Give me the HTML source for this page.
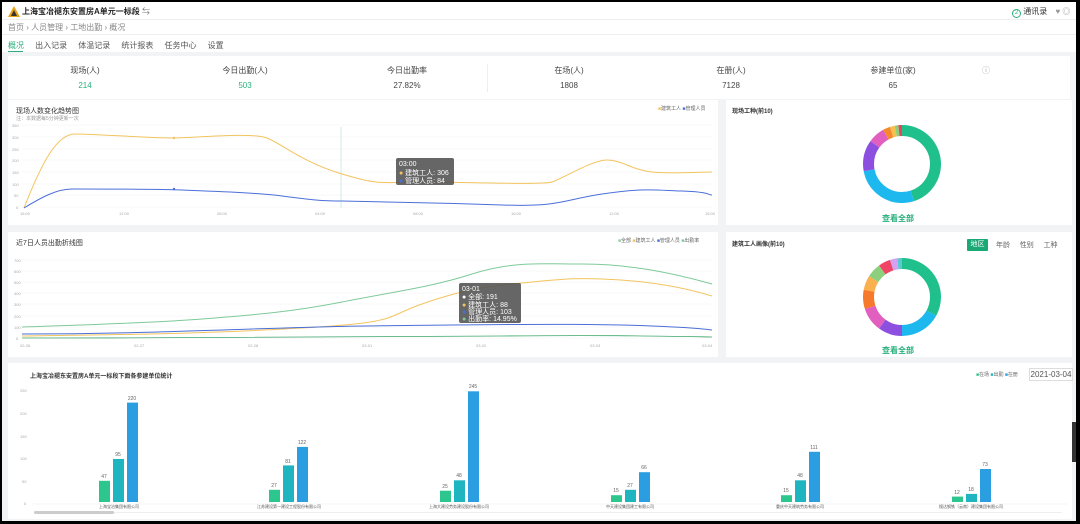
<!DOCTYPE html>
<html><head><meta charset="utf-8"><style>
*{margin:0;padding:0;box-sizing:border-box}
body{width:1080px;height:524px;overflow:hidden;background:#000;font-family:"Liberation Sans","Noto Sans CJK SC",sans-serif;color:#333;position:relative}
.frame{position:absolute;left:2px;top:2px;width:1074px;height:519px;background:#f2f3f5;overflow:hidden}
.abs{position:absolute}
.card{position:absolute;background:#fff}
.t{font-size:7px;color:#333;position:absolute}
</style></head><body>
<div class="frame">
 <div class="abs" style="left:0;top:0;width:1074px;height:50px;background:#fff"></div>
 <svg class="abs" style="left:6px;top:4px" width="12" height="11" viewBox="0 0 12 11"><path d="M6 0L12 11H0Z" fill="#e8a317"/><path d="M6 4L9 10H3Z" fill="#333"/></svg>
 <div class="abs" style="left:20px;top:4px;font-size:8px;font-weight:bold;color:#222">上海宝冶褪东安置房A单元一标段 <span style="font-weight:normal;color:#777">⇆</span></div>
 <div class="abs" style="left:1010px;top:4px;font-size:8px;color:#333"><span style="display:inline-block;width:9px;height:9px;border:1px solid #2ab07c;border-radius:50%;font-size:6px;text-align:center;line-height:7px;color:#2ab07c">2</span> 通讯录 <span style="color:#999;margin-left:6px">♥ ◎</span></div>
 <div class="abs" style="left:0;top:17px;width:1074px;height:1px;background:#eee"></div>
 <div class="abs" style="left:6px;top:20px;font-size:8px;color:#888">首页 › 人员管理 › 工地出勤 › 概况</div>
 <div class="abs" style="left:0;top:32px;width:1074px;height:1px;background:#eee"></div>
 <div class="abs" style="left:6px;top:38px;font-size:8px;color:#555;word-spacing:0"><span style="color:#2ab07c">概况</span>&nbsp;&nbsp;&nbsp;&nbsp;&nbsp;出入记录&nbsp;&nbsp;&nbsp;&nbsp;&nbsp;体温记录&nbsp;&nbsp;&nbsp;&nbsp;&nbsp;统计报表&nbsp;&nbsp;&nbsp;&nbsp;&nbsp;任务中心&nbsp;&nbsp;&nbsp;&nbsp;&nbsp;设置</div>
 <div class="abs" style="left:6px;top:49px;width:15px;height:1px;background:#2ab07c"></div>

 <div class="card" style="left:6px;top:54px;width:1062px;height:43px"></div>
 <div class="abs" style="top:63px;left:0;width:1074px;font-size:8px;color:#444">
  <span class="abs" style="left:48px;width:70px;text-align:center">现场(人)</span>
  <span class="abs" style="left:208px;width:70px;text-align:center">今日出勤(人)</span>
  <span class="abs" style="left:370px;width:70px;text-align:center">今日出勤率</span>
  <span class="abs" style="left:532px;width:70px;text-align:center">在场(人)</span>
  <span class="abs" style="left:694px;width:70px;text-align:center">在册(人)</span>
  <span class="abs" style="left:856px;width:70px;text-align:center">参建单位(家)</span>
  <span class="abs" style="left:980px;color:#aaa">ⓘ</span>
 </div>
 <div class="abs" style="top:79px;left:0;width:1074px;font-size:8px;color:#444">
  <span class="abs" style="left:48px;width:70px;text-align:center;color:#2ab07c">214</span>
  <span class="abs" style="left:208px;width:70px;text-align:center;color:#2ab07c">503</span>
  <span class="abs" style="left:370px;width:70px;text-align:center">27.82%</span>
  <span class="abs" style="left:532px;width:70px;text-align:center">1808</span>
  <span class="abs" style="left:694px;width:70px;text-align:center">7128</span>
  <span class="abs" style="left:856px;width:70px;text-align:center">65</span>
 </div>
 <div class="abs" style="left:485px;top:62px;width:1px;height:28px;background:#eee"></div>

 <!-- chart 1 -->
 <div class="card" style="left:6px;top:98px;width:710px;height:125px"></div>
 <div class="t" style="left:14px;top:104px;font-size:7px">现场人数变化趋势图</div>
 <div class="t" style="left:14px;top:113px;font-size:5px;color:#999">注：本数据每5分钟更新一次</div>
 <div class="t" style="left:656px;top:103px;font-size:5px;color:#666"><span style="color:#f2c45f">■</span>建筑工人 <span style="color:#4a6fd8">■</span>管理人员</div>
 <svg class="abs" style="left:0;top:0" width="720" height="230">
  <g stroke="#f0f0f0" stroke-width="0.5">
   <line x1="20" y1="123" x2="710" y2="123"/><line x1="20" y1="135" x2="710" y2="135"/><line x1="20" y1="147" x2="710" y2="147"/><line x1="20" y1="158" x2="710" y2="158"/><line x1="20" y1="170" x2="710" y2="170"/><line x1="20" y1="182" x2="710" y2="182"/><line x1="20" y1="193" x2="710" y2="193"/><line x1="20" y1="205" x2="710" y2="205"/>
  </g>
  <g font-size="4" fill="#aaa"><text x="10" y="125">350</text><text x="10" y="137">300</text><text x="10" y="149">250</text><text x="10" y="160">200</text><text x="10" y="172">150</text><text x="10" y="184">100</text><text x="12" y="195">50</text><text x="14" y="207">0</text>
  <text x="18" y="213">16:00</text><text x="117" y="213">12:00</text><text x="215" y="213">08:00</text><text x="313" y="213">04:00</text><text x="411" y="213">08:00</text><text x="509" y="213">16:00</text><text x="607" y="213">12:00</text><text x="703" y="213">16:00</text></g>
  <line x1="339" y1="125" x2="339" y2="206" stroke="#bfe3d6" stroke-width="0.7"/>
  <path d="M22 206C40 160 55 132 73 132S150 136 170 136S250 130 265 136S300 160 340 172S380 180 420 180S540 183 550 180S590 158 605 158S630 168 650 170S700 170 710 170" fill="none" stroke="#f2c45f" stroke-width="1"/>
  <path d="M22 206C40 195 55 187 70 187S160 187 180 188S250 190 280 194S320 199 340 199S440 201 500 203S560 198 600 192S650 188 680 189S705 193 710 193" fill="none" stroke="#4a6fd8" stroke-width="1"/>
  <circle cx="172" cy="136" r="1.2" fill="#f2c45f"/><circle cx="172" cy="187" r="1.2" fill="#4a6fd8"/>
  <rect x="394" y="156" width="58" height="27" rx="2" fill="#555" opacity=".9"/>
  <g font-size="7" fill="#fff"><text x="397" y="164">03:00</text><text x="397" y="173"><tspan fill="#f2c45f">●</tspan> 建筑工人: 306</text><text x="397" y="181"><tspan fill="#4a6fd8">●</tspan> 管理人员: 84</text></g>
 </svg>

 <!-- right donut 1 -->
 <div class="card" style="left:724px;top:98px;width:346px;height:125px"></div>
 <div class="t" style="left:730px;top:104px;font-weight:bold;font-size:6px">现场工种(前10)</div>
 <svg class="abs" style="left:858px;top:120px" width="84" height="84" viewBox="0 0 84 84">
  <g fill="none" stroke-width="11" transform="rotate(-90 42 42)">
   <circle cx="42" cy="42" r="33.5" pathLength="100" stroke="#1fc08c" stroke-dasharray="45 55" stroke-dashoffset="0"/>
   <circle cx="42" cy="42" r="33.5" pathLength="100" stroke="#1db8ee" stroke-dasharray="27 73" stroke-dashoffset="-45"/>
   <circle cx="42" cy="42" r="33.5" pathLength="100" stroke="#8d4fe0" stroke-dasharray="13 87" stroke-dashoffset="-72"/>
   <circle cx="42" cy="42" r="33.5" pathLength="100" stroke="#e05fbf" stroke-dasharray="7 93" stroke-dashoffset="-85"/>
   <circle cx="42" cy="42" r="33.5" pathLength="100" stroke="#f7892c" stroke-dasharray="3 97" stroke-dashoffset="-92"/>
   <circle cx="42" cy="42" r="33.5" pathLength="100" stroke="#f6c04f" stroke-dasharray="2 98" stroke-dashoffset="-95"/>
   <circle cx="42" cy="42" r="33.5" pathLength="100" stroke="#8ccf7c" stroke-dasharray="1.5 98.5" stroke-dashoffset="-97"/>
   <circle cx="42" cy="42" r="33.5" pathLength="100" stroke="#e8435f" stroke-dasharray="1.5 98.5" stroke-dashoffset="-98.5"/>
  </g></svg>
 <div class="abs" style="left:880px;top:211px;font-size:8px;color:#2ab07c;font-weight:bold">查看全部</div>

 <!-- chart 2 -->
 <div class="card" style="left:6px;top:230px;width:710px;height:125px"></div>
 <div class="t" style="left:14px;top:236px;font-size:7px">近7日人员出勤折线图</div>
 <div class="t" style="left:616px;top:235px;font-size:5px;color:#666"><span style="color:#8ccf9a">■</span>全部 <span style="color:#f2c45f">■</span>建筑工人 <span style="color:#4a6fd8">■</span>管理人员 <span style="color:#7fc9a0">■</span>出勤率</div>
 <svg class="abs" style="left:0;top:0" width="720" height="360">
  <g stroke="#f0f0f0" stroke-width="0.5">
   <line x1="20" y1="258" x2="710" y2="258"/><line x1="20" y1="269" x2="710" y2="269"/><line x1="20" y1="280" x2="710" y2="280"/><line x1="20" y1="291" x2="710" y2="291"/><line x1="20" y1="302" x2="710" y2="302"/><line x1="20" y1="314" x2="710" y2="314"/><line x1="20" y1="325" x2="710" y2="325"/><line x1="20" y1="336" x2="710" y2="336"/>
  </g>
  <g font-size="4" fill="#aaa"><text x="12" y="260">700</text><text x="12" y="271">600</text><text x="12" y="282">500</text><text x="12" y="293">400</text><text x="12" y="304">300</text><text x="12" y="316">200</text><text x="12" y="327">100</text><text x="14" y="338">0</text>
  <text x="18" y="345">02-26</text><text x="132" y="345">02-27</text><text x="246" y="345">02-28</text><text x="360" y="345">03-01</text><text x="474" y="345">03-02</text><text x="588" y="345">03-03</text><text x="700" y="345">03-04</text></g>
  <path d="M20 325C80 323 150 321 200 317S290 310 340 300S430 285 470 272S540 262 580 262S660 268 710 282" fill="none" stroke="#7fc99a" stroke-width="1"/>
  <path d="M20 334C100 333 200 332 300 326S380 316 420 302S480 285 520 281S570 276 600 277S670 282 710 294" fill="none" stroke="#f2c45f" stroke-width="1"/>
  <path d="M20 332C100 332 160 330 250 327S350 324 450 323S600 322 650 324S700 327 710 328" fill="none" stroke="#4a6fd8" stroke-width="1"/>
  <path d="M20 336C200 336 400 335 500 334S650 334 710 335" fill="none" stroke="#3aa56a" stroke-width="0.8"/>
  <rect x="457" y="281" width="62" height="40" rx="2" fill="#555" opacity=".9"/>
  <g font-size="7" fill="#fff"><text x="460" y="289">03-01</text><text x="460" y="297">● 全部: 191</text><text x="460" y="305"><tspan fill="#f2c45f">●</tspan> 建筑工人: 88</text><text x="460" y="312"><tspan fill="#4a6fd8">●</tspan> 管理人员: 103</text><text x="460" y="319"><tspan fill="#7fc99a">●</tspan> 出勤率: 14.95%</text></g>
 </svg>

 <!-- right donut 2 -->
 <div class="card" style="left:724px;top:230px;width:346px;height:125px"></div>
 <div class="t" style="left:730px;top:237px;font-weight:bold;font-size:6px">建筑工人画像(前10)</div>
 <div class="abs" style="left:965px;top:237px;width:21px;height:12px;background:#1aa874;color:#fff;font-size:7px;text-align:center;line-height:12px;border-radius:1px">地区</div>
 <div class="abs" style="left:994px;top:238px;font-size:7px;color:#666">年龄&nbsp;&nbsp;&nbsp;&nbsp;&nbsp;性别&nbsp;&nbsp;&nbsp;&nbsp;&nbsp;工种</div>
 <svg class="abs" style="left:858px;top:253px" width="84" height="84" viewBox="0 0 84 84">
  <g fill="none" stroke-width="11" transform="rotate(-90 42 42)">
   <circle cx="42" cy="42" r="33.5" pathLength="100" stroke="#1fc08c" stroke-dasharray="33 67" stroke-dashoffset="0"/>
   <circle cx="42" cy="42" r="33.5" pathLength="100" stroke="#1db8ee" stroke-dasharray="17 83" stroke-dashoffset="-33"/>
   <circle cx="42" cy="42" r="33.5" pathLength="100" stroke="#8d4fe0" stroke-dasharray="10 90" stroke-dashoffset="-50"/>
   <circle cx="42" cy="42" r="33.5" pathLength="100" stroke="#e05fbf" stroke-dasharray="10 90" stroke-dashoffset="-60"/>
   <circle cx="42" cy="42" r="33.5" pathLength="100" stroke="#f7792c" stroke-dasharray="8 92" stroke-dashoffset="-70"/>
   <circle cx="42" cy="42" r="33.5" pathLength="100" stroke="#fbb04f" stroke-dasharray="6 94" stroke-dashoffset="-78"/>
   <circle cx="42" cy="42" r="33.5" pathLength="100" stroke="#8ccf7c" stroke-dasharray="6 94" stroke-dashoffset="-84"/>
   <circle cx="42" cy="42" r="33.5" pathLength="100" stroke="#ef4466" stroke-dasharray="5 95" stroke-dashoffset="-90"/>
   <circle cx="42" cy="42" r="33.5" pathLength="100" stroke="#d4a0f0" stroke-dasharray="3 97" stroke-dashoffset="-95"/>
   <circle cx="42" cy="42" r="33.5" pathLength="100" stroke="#5cc8d0" stroke-dasharray="2 98" stroke-dashoffset="-98"/>
  </g></svg>
 <div class="abs" style="left:880px;top:343px;font-size:8px;color:#2ab07c;font-weight:bold">查看全部</div>

 <!-- bar chart -->
 <div class="card" style="left:6px;top:361px;width:1064px;height:156px"></div>
 <div class="t" style="left:28px;top:369px;font-weight:bold;font-size:6px">上海宝冶褪东安置房A单元一标段下面各参建单位统计</div>
 <div class="t" style="left:974px;top:369px;font-size:5px;color:#666"><span style="color:#2ec68f">■</span>在场 <span style="color:#1fb5c0">■</span>出勤 <span style="color:#2a9ee0">■</span>在册</div>
 <div class="abs" style="left:1027px;top:366px;width:44px;height:13px;border:1px solid #ddd;font-size:8px;color:#555;line-height:11px;text-align:center;background:#fff">2021-03-04</div>
 <svg class="abs" style="left:0;top:0" width="1080" height="524">
  <g font-size="4" fill="#aaa"><text x="18" y="390">250</text><text x="18" y="413">200</text><text x="18" y="436">150</text><text x="18" y="458">100</text><text x="20" y="481">50</text><text x="22" y="503">0</text></g>
  <line x1="30" y1="502" x2="1065" y2="502" stroke="#eee" stroke-width="0.6"/>
  <g id="bars" font-size="5" fill="#666" text-anchor="middle">
   <rect x="97" y="478.8" width="11" height="21.2" fill="#2ec68f"/><rect x="111" y="457" width="11" height="43" fill="#1fb5c0"/><rect x="125" y="400.6" width="11" height="99.4" fill="#2a9ee0"/>
   <text x="102" y="476">47</text><text x="116" y="454">95</text><text x="130" y="398">220</text>
   <rect x="267" y="487.8" width="11" height="12.2" fill="#2ec68f"/><rect x="281" y="463.4" width="11" height="36.6" fill="#1fb5c0"/><rect x="295" y="444.9" width="11" height="55.1" fill="#2a9ee0"/>
   <text x="272" y="485">27</text><text x="286" y="461">81</text><text x="300" y="442">122</text>
   <rect x="438" y="488.7" width="11" height="11.3" fill="#2ec68f"/><rect x="452" y="478.3" width="11" height="21.7" fill="#1fb5c0"/><rect x="466" y="389.3" width="11" height="110.7" fill="#2a9ee0"/>
   <text x="443" y="486">25</text><text x="457" y="475">48</text><text x="471" y="386">245</text>
   <rect x="609" y="493.2" width="11" height="6.8" fill="#2ec68f"/><rect x="623" y="487.8" width="11" height="12.2" fill="#1fb5c0"/><rect x="637" y="470.2" width="11" height="29.8" fill="#2a9ee0"/>
   <text x="614" y="490">15</text><text x="628" y="485">27</text><text x="642" y="467">66</text>
   <rect x="779" y="493.2" width="11" height="6.8" fill="#2ec68f"/><rect x="793" y="478.3" width="11" height="21.7" fill="#1fb5c0"/><rect x="807" y="449.8" width="11" height="50.2" fill="#2a9ee0"/>
   <text x="784" y="490">15</text><text x="798" y="475">48</text><text x="812" y="447">111</text>
   <rect x="950" y="494.6" width="11" height="5.4" fill="#2ec68f"/><rect x="964" y="491.9" width="11" height="8.1" fill="#1fb5c0"/><rect x="978" y="467" width="11" height="33" fill="#2a9ee0"/>
   <text x="955" y="492">12</text><text x="969" y="489">18</text><text x="983" y="464">73</text>
   <g font-size="4" fill="#555"><text x="117" y="506">上海宝冶集团有限公司</text><text x="287" y="506">江苏建设第一建设工程股份有限公司</text><text x="457" y="506">上海大建设劳务建设股份有限公司</text><text x="628" y="506">中天建设集团建工有限公司</text><text x="798" y="506">重庆中天建筑劳务有限公司</text><text x="969" y="506">搜达钢铁（云南）建设集团有限公司</text></g>
  </g>
  <rect x="32" y="510" width="1028" height="1" fill="#eee"/>
  <rect x="32" y="509" width="80" height="3" rx="1.5" fill="#ccc"/>
 </svg>
 <div class="abs" style="left:1070px;top:420px;width:4px;height:40px;background:#333"></div>
</div>
</body></html>
